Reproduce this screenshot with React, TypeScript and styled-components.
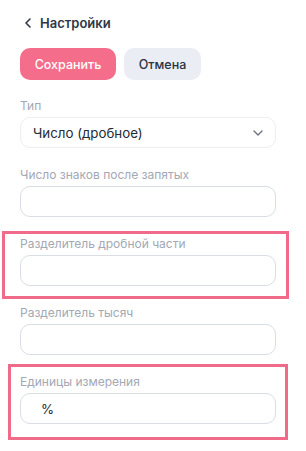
import React from "react";
import styled, { createGlobalStyle } from "styled-components";

const Global = createGlobalStyle`
  html, body { margin: 0; padding: 0; background: #ffffff; }
  body { font-family: Inter, "Noto Sans", sans-serif; -webkit-font-smoothing: antialiased; }
  * { box-sizing: border-box; }
`;

const Page = styled.div`
  width: 306px;
  min-height: 451px;
  padding: 13px 30px 0 20px;
  display: flex;
  flex-direction: column;
`;

const Header = styled.div`
  display: flex;
  align-items: center;
  gap: 9px;
  height: 20px;
  padding-left: 5px;
  font-size: 13px;
  font-weight: 600;
  color: #2f3747;
`;

const Buttons = styled.div`
  display: flex;
  gap: 8px;
  margin-top: 15px;
`;

const Button = styled.button<{ $primary?: boolean }>`
  height: 32px;
  border: none;
  border-radius: 10px;
  font-family: inherit;
  font-size: 12.5px;
  font-weight: 500;
  padding: 0;
  background: ${(p) => (p.$primary ? "#f46d8a" : "#eaedf4")};
  color: ${(p) => (p.$primary ? "#ffffff" : "#2b3242")};
  width: ${(p) => (p.$primary ? 96 : 77)}px;
`;

const Fields = styled.div`
  display: flex;
  flex-direction: column;
  gap: 19px;
  margin-top: 18px;
`;

const Field = styled.div`
  position: relative;
  display: flex;
  flex-direction: column;
  gap: 3px;
`;

const Label = styled.div`
  font-size: 12px;
  line-height: 16px;
  color: #a3a8b4;
`;

const Box = styled.div<{ $soft?: boolean; $indent?: number }>`
  height: 31px;
  width: 256px;
  border: 1px solid ${(p) => (p.$soft ? "#eceef3" : "#d9dde6")};
  border-radius: 10px;
  display: flex;
  align-items: center;
  justify-content: space-between;
  padding: 0 12px 0 ${(p) => p.$indent ?? 12}px;
  font-size: 13.3px;
  color: #252a35;
`;

const Highlight = styled.div<{ $t: number; $l: number; $r: number; $b: number }>`
  position: absolute;
  top: ${(p) => -p.$t}px;
  left: ${(p) => -p.$l}px;
  right: ${(p) => -p.$r}px;
  bottom: ${(p) => -p.$b}px;
  border: 3px solid #f06b89;
  pointer-events: none;
`;

const Chevron = () => (
  <svg width="10" height="6" viewBox="0 0 10 6" fill="none">
    <path d="M1 1l4 4 4-4" stroke="#6b7280" strokeWidth="1.4" strokeLinecap="round" strokeLinejoin="round" />
  </svg>
);

const Back = () => (
  <svg width="6" height="10" viewBox="0 0 6 10" fill="none">
    <path d="M5 1L1 5l4 4" stroke="#2f3747" strokeWidth="1.6" strokeLinecap="round" strokeLinejoin="round" />
  </svg>
);

export default function App() {
  return (
    <>
      <Global />
      <Page>
        <Header>
          <Back />
          Настройки
        </Header>
        <Buttons>
          <Button $primary>Сохранить</Button>
          <Button>Отмена</Button>
        </Buttons>
        <Fields>
          <Field>
            <Label>Тип</Label>
            <Box $soft>
              Число (дробное)
              <Chevron />
            </Box>
          </Field>
          <Field>
            <Label>Число знаков после запятых</Label>
            <Box />
          </Field>
          <Field>
            <Highlight $t={5} $l={18} $r={13} $b={13} />
            <Label>Разделитель дробной части</Label>
            <Box />
          </Field>
          <Field>
            <Label>Разделитель тысяч</Label>
            <Box />
          </Field>
          <Field>
            <Highlight $t={10} $l={12} $r={12} $b={16} />
            <Label>Единицы измерения</Label>
            <Box $indent={20}>%</Box>
          </Field>
        </Fields>
      </Page>
    </>
  );
}
